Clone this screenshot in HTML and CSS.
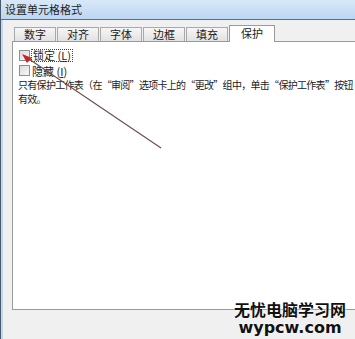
FILE: index.html
```html
<!DOCTYPE html>
<html lang="zh-CN">
<head>
    <meta charset="UTF-8">
    <title>设置单元格格式</title>
    <link rel="stylesheet" href="styles.css">
</head>
<body>
    <div class="frame">
        <div class="titlebar">设置单元格格式</div>
        <div class="dialog">
            <div class="tabs">
                <div class="tab">数字</div>
                <div class="tab">对齐</div>
                <div class="tab">字体</div>
                <div class="tab">边框</div>
                <div class="tab">填充</div>
                <div class="tab active">保护</div>
            </div>
            <div class="panel">
                <label class="check"><span class="box"></span><span class="focus">锁定 (<u>L</u>)</span></label>
                <label class="check"><span class="box"></span><span>隐藏 (<u>I</u>)</span></label>
                <p class="note">
                    <span class="line">只有保护工作表（在“审阅”选项卡上的“更改”组中，单击“保护工作表”按钮</span>
                    <span class="line">有效。</span>
                </p>
            </div>
            <div class="footer"></div>
        </div>
        <svg class="arrow" width="355" height="339" viewBox="0 0 355 339">
            <line x1="25" y1="57" x2="160" y2="148" stroke="#6a4c4a" stroke-width="1.1"/>
            <polygon points="21,54 31,58 26,63" fill="#c0262a"/>
        </svg>
        <div class="watermark">
            <div class="wm-cn">无忧电脑学习网</div>
            <div class="wm-en">wypcw.com</div>
        </div>
    </div>
</body>
</html>
```

FILE: styles.css
```css
body {
    margin: 0;
    font-family: 'Noto Sans CJK SC', 'Liberation Sans', sans-serif;
    font-size: 11px;
    color: #1a1a1a;
    background: #f0f0f0;
}
.frame {
    position: relative;
    width: 355px;
    height: 339px;
    overflow: hidden;
    border-left: 1px solid #4a5a6c;
    box-sizing: border-box;
    display: flex;
    flex-direction: column;
}
.titlebar {
    height: 20px;
    line-height: 19px;
    padding-left: 4px;
    background: linear-gradient(#d8e8f8, #bcd6f2);
    border-bottom: 1px solid #5a6e84;
    box-sizing: border-box;
    color: #222;
}
.dialog {
    flex: 1;
    display: flex;
    flex-direction: column;
    padding-left: 9px;
    border-left: 2px solid #c6d8ec;
    background: #f0f0f0;
}
.tabs {
    display: flex;
    align-items: flex-end;
    height: 21px;
    padding-left: 2px;
    box-sizing: border-box;
}
.tab {
    width: 40px;
    height: 13px;
    line-height: 13px;
    margin-right: 1px;
    text-align: center;
    border: 1px solid #a9a9a9;
    border-bottom: none;
    background: linear-gradient(#f6f6f6, #e2e2e2);
    color: #222;
}
.tab.active {
    width: 44px;
    height: 16px;
    line-height: 15px;
    background: #fff;
    border-color: #9a9a9a;
    position: relative;
    top: 1px;
}
.panel {
    height: 269px;
    background: #fff;
    border: 1px solid #9a9a9a;
    border-right: none;
    padding: 6px 0 0 6px;
    box-sizing: border-box;
    overflow: hidden;
}
.check {
    display: flex;
    align-items: center;
    gap: 2px;
    height: 15px;
}
.box {
    width: 9px;
    height: 9px;
    border: 1px solid #8e8f8f;
    background: linear-gradient(135deg, #dcdcdc, #f8f8f8);
}
.focus {
    outline: 1px dotted #444;
    padding: 0 1px;
    line-height: 11px;
}
u {
    text-decoration: underline;
}
.note {
    margin: 0 0 0 -1px;
    font-size: 10px;
    line-height: 14px;
    letter-spacing: -0.7px;
}
.line {
    display: block;
    white-space: nowrap;
}
.footer {
    flex: 1;
}
.arrow {
    position: absolute;
    left: 0;
    top: 0;
    pointer-events: none;
}
.watermark {
    position: absolute;
    right: 9px;
    top: 299px;
    text-align: center;
    font-weight: bold;
    color: #111;
}
.wm-cn {
    font-size: 16px;
    line-height: 20px;
    text-shadow: 0 0 2px #fff, 0 0 2px #fff;
}
.wm-en {
    font-family: 'DejaVu Sans', sans-serif;
    font-size: 16px;
    line-height: 17px;
    text-shadow: 0 0 2px #fff;
}
```
